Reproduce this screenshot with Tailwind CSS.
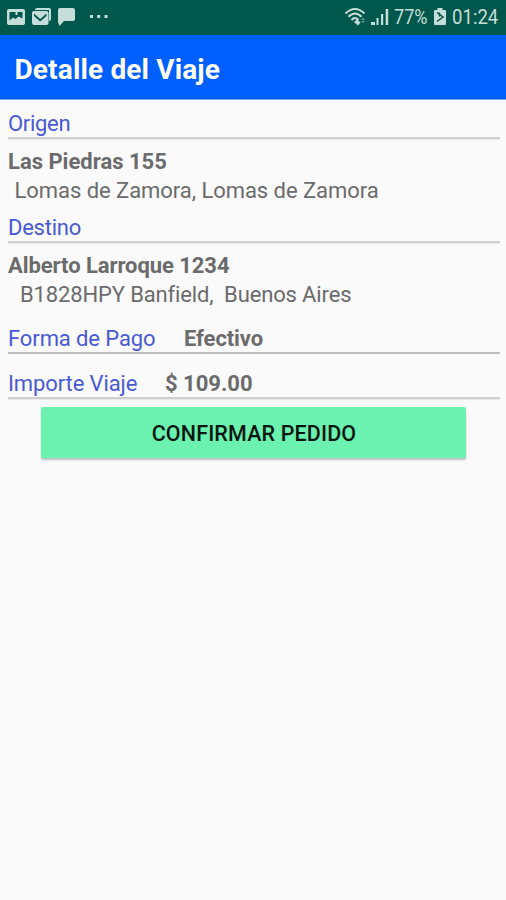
<!DOCTYPE html>
<html lang="es">
<head>
<meta charset="utf-8">
<title>Detalle del Viaje</title>
<script src="https://cdn.jsdelivr.net/npm/@tailwindcss/browser@4"></script>
</head>
<body class="w-[506px] h-[900px] overflow-hidden bg-[#fafafa] font-['Roboto',sans-serif] text-[22px] leading-[26px] text-[#6b6b6b]">
<div class="flex flex-col h-full">
<header class="h-[35px] shrink-0 bg-[#00574b] flex items-start justify-between text-[#c6ded9]">
<svg class="w-[115px] h-[34px]" viewBox="0 0 115 34" fill="currentColor"><path fill-rule="evenodd" d="M9 9h14q2 0 2 2v12q0 2-2 2H9q-2 0-2-2V11q0-2 2-2zM9.500 12v8.500l3.500-3 2.500 1.500 3-2.500 4 2v-6.500h-5v3h-2v-3z"/><path d="M37 8h12q2 0 2 2v9q0 2-2 2V10H35q0-2 2-2z"/><path fill-rule="evenodd" d="M34 11h12.500q2 0 2 2v10q0 2-2 2H34q-2 0-2-2V13q0-2 2-2zM34 13.500l6.200 5.500 6.300-5.500v2.500L40.200 21.500 34 16z"/><path d="M60 8h13q2 0 2 2v9q0 2-2 2H64l-4.500 5L58 22V10q0-2 2-2z"/><rect x="90" y="15" width="3" height="3"/><rect x="97.200" y="15" width="3" height="3"/><rect x="104.500" y="15" width="3" height="3"/></svg>
<div class="flex items-center h-[34px] w-[163px]">
<svg class="w-[51px] h-[34px] shrink-0" viewBox="0 0 51 34" fill="currentColor"><g fill="none" stroke="currentColor" stroke-width="2"><path d="M2.500 13.500Q12 4.500 21.500 13.500"/><path d="M5.500 16.800Q12 10 18.500 16.800"/><path d="M8.500 20Q12 16 15.500 20"/></g><path d="M14 19.500l3.500 3-2.500 3-4-3.500z"/><path d="M20 17.500l2 2.500h-4zM20 23l-2-2h4z" opacity=".5"/><rect x="28" y="22" width="4" height="3"/><rect x="33.500" y="18" width="2" height="7"/><rect x="38" y="14" width="2.200" height="11"/><rect x="42.700" y="9" width="2.500" height="16"/></svg>
<span class="w-[38px] text-[21px] origin-left scale-x-[.86]">77%</span>
<svg class="w-[20px] h-[34px] shrink-0" viewBox="0 0 20 34"><path fill="currentColor" d="M5.500 8h5v2H13q1 0 1 1v13q0 1-1 1H3q-1 0-1-1V11q0-1 1-1h2.500z"/><path d="M5 12.500l6 4.500-6 4.500M7.500 12.500v4" fill="none" stroke="#00574b" stroke-width="1.500"/></svg>
<span class="text-[21px] origin-left scale-x-[.885]">01:24</span>
</div>
</header>
<h1 class="h-[65px] shrink-0 bg-[#0060ff] border-b border-[#75a5f3] text-white text-[28px] font-bold leading-[32px] tracking-[0.150px] pl-[14.500px] pt-[19px]">Detalle del Viaje</h1>
<main class="flex flex-col pl-[8px] pr-[6px] pt-[11px]">
<h2 class="text-[#4859d3] h-[26px] tracking-[-0.300px]">Origen</h2>
<div class="h-[3px] mb-[9px] bg-[#cfcfcf] border-b border-[#e8e8e8]"></div>
<p class="font-bold h-[29px]">Las Piedras 155</p>
<p class="h-[37px] pl-[6.500px] tracking-[-0.050px]">Lomas de Zamora, Lomas de Zamora</p>
<h2 class="text-[#4859d3] h-[26px] tracking-[-0.250px]">Destino</h2>
<div class="h-[3px] mb-[9px] bg-[#cfcfcf] border-b border-[#e8e8e8]"></div>
<p class="font-bold h-[29px] tracking-[-0.070px]">Alberto Larroque 1234</p>
<p class="h-[44px] pl-[12px] tracking-[-0.140px] whitespace-pre">B1828HPY Banfield,  Buenos Aires</p>
<div class="flex h-[26px]"><h2 class="text-[#4859d3] w-[176px] tracking-[-0.100px]">Forma de Pago</h2><b class="tracking-[-0.100px]">Efectivo</b></div>
<div class="h-[2px] mb-[17px] bg-[#bdbdbd]"></div>
<div class="flex h-[26px]"><h2 class="text-[#4859d3] w-[157px] tracking-[-0.120px]">Importe Viaje</h2><b>$ 109.00</b></div>
<div class="h-[3px] bg-[#cfcfcf] border-b border-[#e8e8e8]"></div>
<button class="mt-[7px] ml-[33px] w-[425px] h-[51px] pt-[2px] pl-px rounded-[2px] bg-[#6bf2b1] text-[#07170f] text-[21.500px] font-medium tracking-[0.130px] shadow-[0_2px_2px_rgba(0,0,0,.24)]">CONFIRMAR PEDIDO</button>
</main>
</div>
</body>
</html>
